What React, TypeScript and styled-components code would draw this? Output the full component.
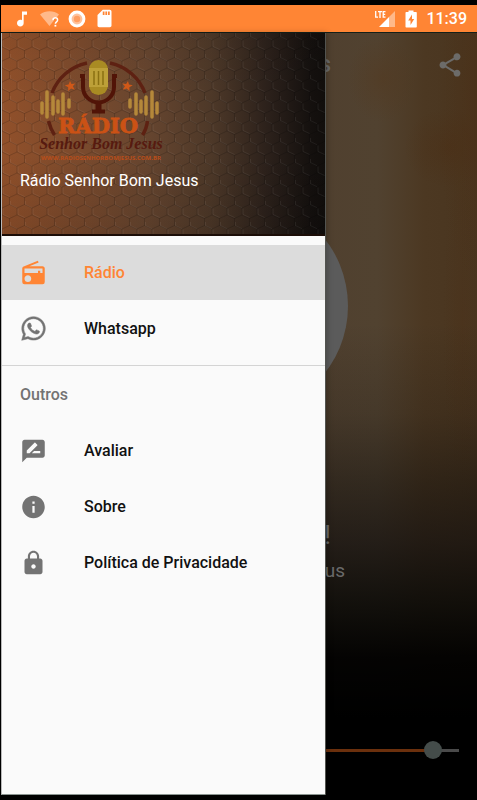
import React from "react";
import styled, { createGlobalStyle } from "styled-components";
import {
  MdInfo,
  MdLock,
  MdMusicNote,
  MdRadio,
  MdRateReview,
  MdSdCard,
  MdShare,
} from "react-icons/md";
import { FaWhatsapp } from "react-icons/fa";

const GlobalStyle = createGlobalStyle`
  *, *::before, *::after { box-sizing: border-box; }
  body {
    margin: 0;
    background: #000;
    font-family: Roboto, "Noto Sans", sans-serif;
  }
  h1, h2, p, ul { margin: 0; padding: 0; font-weight: 400; }
  ul { list-style: none; }
`;

const Screen = styled.div`
  display: flex;
  flex-direction: column;
  min-height: 100vh;
  padding: 5px 0 5px 1px;
  background: #000;
  overflow: hidden;
`;

const StatusBar = styled.header`
  display: flex;
  align-items: center;
  justify-content: space-between;
  height: 28px;
  padding: 0 10px 0 11px;
  background: #ff8534;
  border-bottom: 1px solid #14201a;
  color: #fff;
`;

const StatusGroup = styled.div<{ $gap: number }>`
  display: flex;
  align-items: center;
  gap: ${(p) => p.$gap}px;
  svg { display: block; }
`;

const Clock = styled.time`
  font-size: 16px;
  line-height: 20px;
  font-weight: 500;
`;

const Stage = styled.div`
  position: relative;
  display: flex;
  flex: 1;
`;

const Player = styled.main`
  display: flex;
  flex: 1;
  flex-direction: column;
  align-items: center;
  min-width: 0;
  color: #6a6a6a;
  background:
    linear-gradient(to bottom, transparent 38%, rgba(8, 8, 8, 0.16) 50%, rgba(8, 8, 8, 0.42) 59%, rgba(14, 12, 12, 0.68) 67%, rgba(8, 8, 6, 0.86) 75%, rgba(0, 0, 0, 0.95) 82%, #000 90%),
    radial-gradient(ellipse 34px 44px at 80% 6%, rgba(84, 54, 26, 0.4), transparent),
    radial-gradient(ellipse 40px 190px at 100% 8%, rgba(76, 46, 20, 0.45), transparent),
    radial-gradient(ellipse 44px 40px at 94% 15%, rgba(74, 44, 18, 0.4), transparent),
    radial-gradient(ellipse 20px 160px at 97% 38%, rgba(76, 48, 24, 0.35), transparent),
    linear-gradient(to right, #50402f 66%, #514230 79%, #4c3822 89%, #49351f 100%);
`;

const AppBar = styled.div`
  display: flex;
  align-items: center;
  justify-content: space-between;
  width: 100%;
  height: 64px;
  padding: 0 13px 0 72px;
`;

const AppTitle = styled.h1`
  flex: 1;
  font-size: 23px;
  line-height: 32px;
  font-weight: 500;
  white-space: nowrap;
`;

const ShareButton = styled.button`
  display: flex;
  padding: 0;
  border: 0;
  background: none;
  color: #6c6b69;
`;

const Cover = styled.div`
  width: 218px;
  height: 218px;
  margin-top: 100px;
  border-radius: 50%;
  background: #5b5b5b;
`;

const Greeting = styled.h2`
  margin-top: 104px;
  font-size: 26px;
  line-height: 32px;
`;

const Station = styled.p`
  margin-top: 8px;
  font-size: 19px;
  line-height: 24px;
`;

const Volume = styled.input`
  appearance: none;
  width: calc(100% - 36px);
  height: 20px;
  margin: auto 0 35px;
  background: linear-gradient(to right, #6b300d 94%, #4a4a4a 94%) center / 100% 3px no-repeat;
  &::-webkit-slider-thumb {
    appearance: none;
    width: 18px;
    height: 18px;
    border-radius: 50%;
    background: #444c4a;
  }
`;

const Drawer = styled.aside`
  position: absolute;
  inset: 0 auto 0 0;
  width: calc(100% - 152px);
  background: #fafafa;
  border-left: 1px solid #b9b9b9;
  border-bottom: 1px solid #8b9490;
  box-shadow: 1px 0 0 #52534f, 2px 0 6px rgba(0, 0, 0, 0.25);
`;

const DrawerHeader = styled.div`
  position: relative;
  height: 203px;
  padding: 26px 18px 0;
  border-bottom: 2px solid #1b0d07;
  color: #fff;
  background:
    linear-gradient(to bottom, rgba(0, 0, 0, 0.05) 0%, transparent 30%, transparent 60%, rgba(0, 0, 0, 0.12) 100%),
    linear-gradient(to right, #91502a 0%, #7a4a2d 25%, #66452f 45%, #4d3828 65%, #2c211b 82%, #14100e 96%, #110e0c 100%);
`;

const HoneycombSvg = styled.svg`
  position: absolute;
  inset: 0;
  width: 100%;
  height: 100%;
`;

const LogoSvg = styled.svg`
  position: relative;
  display: block;
  margin-left: 19px;
`;

const HeaderTitle = styled.p`
  position: relative;
  margin-top: 4px;
  font-size: 16px;
  line-height: 24px;
`;

const Menu = styled.ul`
  display: grid;
  gap: 1px;
`;

const FirstSection = styled.nav`
  padding: 9px 0;
  border-bottom: 1px solid #d4d4d4;
`;

const SecondSection = styled.nav`
  padding-top: 17px;
`;

const SectionLabel = styled.h2`
  margin-bottom: 16px;
  padding-left: 18px;
  color: #737373;
  font-size: 16px;
  line-height: 24px;
  font-weight: 500;
`;

const MenuLink = styled.a<{ $active?: boolean }>`
  display: flex;
  align-items: center;
  gap: 37px;
  height: 55px;
  padding: 0 18px;
  background: ${(p) => (p.$active ? "#dcdcdc" : "transparent")};
  color: ${(p) => (p.$active ? "#ff8534" : "#111")};
  font-size: 16px;
  line-height: 24px;
  font-weight: 500;
  text-decoration: none;
  svg { color: ${(p) => (p.$active ? "#ff8534" : "#737373")}; }
`;

const IconSlot = styled.span`
  display: flex;
  justify-content: center;
  width: 27px;
`;

function WifiUnknown() {
  return (
    <svg width="20" height="18" viewBox="0 0 20 18" aria-hidden="true">
      <path d="M0 4.5C5.5.2 13.5.2 19 4.5L17 7h-3.5v4L9.500 16z" fill="#ffb98a" />
      <path d="M13 10.200c0-3.200 4.600-3 4.600-.2 0 1.900-2.200 1.900-2.200 3.800" fill="none" stroke="#fff" strokeWidth="1.500" />
      <rect x="14.500" y="14.800" width="1.800" height="1.800" fill="#fff" />
    </svg>
  );
}

function RecordRing() {
  return (
    <svg width="18" height="18" viewBox="0 0 18 18" aria-hidden="true">
      <circle cx="9" cy="9" r="6.900" fill="#ffc29c" stroke="#fff" strokeWidth="3" />
      <circle cx="9" cy="9" r="3.200" fill="#ff9d60" />
    </svg>
  );
}

function LteSignal() {
  return (
    <svg width="22" height="20" viewBox="0 0 22 20" aria-hidden="true">
      <path d="M21 2v16h-6V8z" fill="#ffb98a" />
      <path d="M15 8v10H5z" fill="#fff" />
      <path d="M1.700 2v6.200H4M4 2.700h4M6 2.700v6.200M11.500 2.700H9.200v5.500h2.300M9.200 5.400h2" fill="none" stroke="#fff" strokeWidth="1.300" />
    </svg>
  );
}

function BatteryCharging() {
  return (
    <svg width="12" height="18" viewBox="0 0 12 18" aria-hidden="true">
      <path d="M3.500.5h5V2H11a.8.8 0 0 1 .8.8V16.700a.8.8 0 0 1-.8.8H1.300a.8.8 0 0 1-.8-.8V2.800A.8.8 0 0 1 1.300 2h2.200z" fill="#fff" />
      <path d="M7 4.500 3.200 10.500h2.300V15l3.700-6H7z" fill="#ff8534" />
    </svg>
  );
}

function Honeycomb() {
  return (
    <HoneycombSvg aria-hidden="true">
      <defs>
        <pattern id="hex" width="15" height="21" patternUnits="userSpaceOnUse">
          <path d="M7.500 0v3.500L0 7v7l7.500 3.500V21M7.500 3.500L15 7v7l-7.500 3.500" fill="none" stroke="#000" strokeOpacity=".16" />
          <path d="M8.500 0v3.700L15 6.700M1 7.500v6l6.500 3" fill="none" stroke="#fff" strokeOpacity=".06" />
        </pattern>
      </defs>
      <rect width="100%" height="100%" fill="url(#hex)" />
    </HoneycombSvg>
  );
}

const levelBars = [
  [0, 43, 55],
  [5, 32, 59],
  [11, 37, 56],
  [16, 41, 54],
  [21, 34, 56],
  [27, 40, 49],
];

function StationLogo() {
  return (
    <LogoSvg width="126" height="106" viewBox="0 0 126 106" role="img" aria-label="Rádio Senhor Bom Jesus">
      <g fill="none" stroke="#5e2112" strokeWidth="3.500">
        <path d="M13 34A48 48 0 0 1 48 4" />
        <path d="M71 4A48 48 0 0 1 106 34" />
        <path d="M9.500 62q2 8 6 14" />
        <path d="M108.500 62q-1 8-5 14" />
      </g>
      <g fill="none" stroke="#511407" strokeWidth="4">
        <path d="M41 17h3v11a15.500 15.500 0 0 0 31 0V17h3" />
        <path d="M59.500 43v11" strokeWidth="6" />
        <path d="M53 52.500h13" />
      </g>
      <rect x="50" y="1" width="19" height="35" rx="9.500" fill="#a98b23" />
      <path d="M50 9h19v19H50z" fill="#bda038" />
      <path d="M55 12v14M59.500 12v14M64 12v14" stroke="#8b7012" strokeWidth="1.500" />
      <g fill="#cf5818">
        <path d="M31 22l1.500 3 3.800-.5-2.500 2.800 2 3.500-3.700-1.400-3 2.600.1-3.800-3.400-1.900 3.800-.7z" />
        <path d="M89 22l1 3.600 3.800.7-3.400 1.900.1 3.800-3-2.600-3.700 1.400 2-3.500-2.500-2.800 3.800.5z" />
      </g>
      <g stroke="#b5883a" strokeWidth="3.500" strokeLinecap="round">
        {levelBars.map(([x, top, bottom]) => (
          <React.Fragment key={x}>
            <path d={`M${x + 3} ${top + 1}V${bottom - 1}`} />
            <path d={`M${118 - x} ${top + 1}V${bottom - 1}`} />
          </React.Fragment>
        ))}
      </g>
      <text x="59" y="74" textAnchor="middle" fill="#cb5215" stroke="#cb5215" strokeWidth=".8" fontFamily="'DejaVu Serif', serif" fontWeight="700" fontSize="21">
        RÁDIO
      </text>
      <text x="62" y="90" textAnchor="middle" fill="#571a0f" fontFamily="'Liberation Serif', serif" fontStyle="italic" fontWeight="700" fontSize="16">
        Senhor Bom Jesus
      </text>
      <text x="62" y="101" textAnchor="middle" fill="#b94d19" fontFamily="'Open Sans', sans-serif" fontWeight="700" fontSize="6">
        WWW.RADIOSENHORBOMJESUS.COM.BR
      </text>
    </LogoSvg>
  );
}

export default function App() {
  return (
    <Screen>
      <GlobalStyle />
      <StatusBar>
        <StatusGroup $gap={8}>
          <MdMusicNote size={20} />
          <WifiUnknown />
          <RecordRing />
          <MdSdCard size={21} />
        </StatusGroup>
        <StatusGroup $gap={9}>
          <LteSignal />
          <BatteryCharging />
          <Clock>11:39</Clock>
        </StatusGroup>
      </StatusBar>
      <Stage>
        <Player>
          <AppBar>
            <AppTitle>Rádio Senhor Bom Jesus</AppTitle>
            <ShareButton type="button" aria-label="Compartilhar">
              <MdShare size={28} />
            </ShareButton>
          </AppBar>
          <Cover />
          <Greeting>Seja bem-vindo!</Greeting>
          <Station>Rádio Senhor Bom Jesus</Station>
          <Volume type="range" min="0" max="100" defaultValue="96" aria-label="Volume" />
        </Player>
        <Drawer>
          <DrawerHeader>
            <Honeycomb />
            <StationLogo />
            <HeaderTitle>Rádio Senhor Bom Jesus</HeaderTitle>
          </DrawerHeader>
          <FirstSection aria-label="Principal">
            <Menu>
              <li>
                <MenuLink href="#radio" $active aria-current="page">
                  <IconSlot><MdRadio size={28} /></IconSlot>
                  Rádio
                </MenuLink>
              </li>
              <li>
                <MenuLink href="#whatsapp">
                  <IconSlot><FaWhatsapp size={27} stroke="currentColor" strokeWidth={10} /></IconSlot>
                  Whatsapp
                </MenuLink>
              </li>
            </Menu>
          </FirstSection>
          <SecondSection aria-labelledby="outros">
            <SectionLabel id="outros">Outros</SectionLabel>
            <Menu>
              <li>
                <MenuLink href="#avaliar">
                  <IconSlot><MdRateReview size={28} /></IconSlot>
                  Avaliar
                </MenuLink>
              </li>
              <li>
                <MenuLink href="#sobre">
                  <IconSlot><MdInfo size={28} /></IconSlot>
                  Sobre
                </MenuLink>
              </li>
              <li>
                <MenuLink href="#privacidade">
                  <IconSlot><MdLock size={28} /></IconSlot>
                  Política de Privacidade
                </MenuLink>
              </li>
            </Menu>
          </SecondSection>
        </Drawer>
      </Stage>
    </Screen>
  );
}
